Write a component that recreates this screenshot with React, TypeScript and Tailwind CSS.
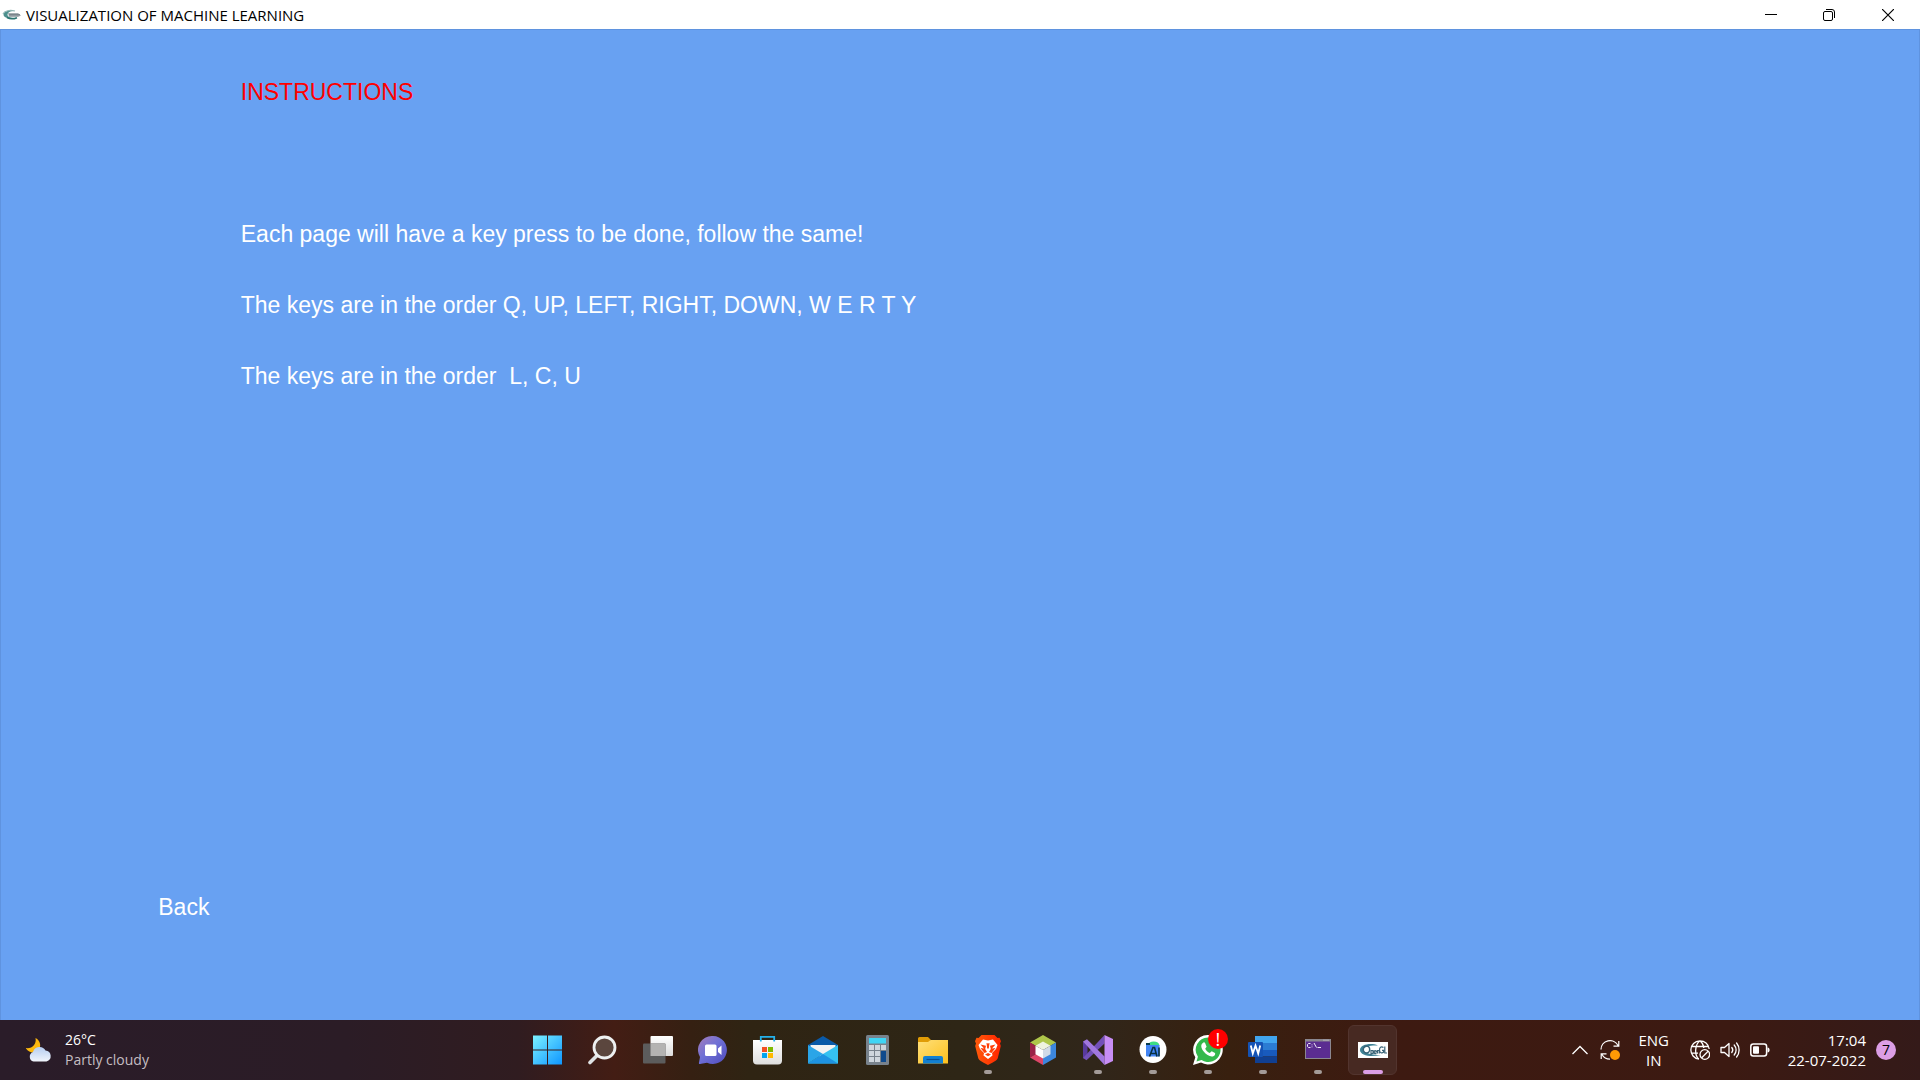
import type { ReactNode } from "react";

const uiFont = "font-['Open_Sans','Noto_Sans',sans-serif]";

function OpenGLMark() {
  return (
    <svg viewBox="0 0 20 12" className="h-3 w-5" aria-hidden="true">
      <path d="M12 2C7 .5 2 2.500 1.500 5.500c0 3.500 7 5 12.500 3.500C9 9 5.500 8 5.500 5.800 5.500 3.500 8.500 2 12 2z" fill="#4c8f8d" />
      <path d="M1 5C2.500 1.500 8 .8 13 2" fill="none" stroke="#8fb5b4" strokeWidth="1.200" />
      <path d="M6 4h10l3 2.500L16 8H7z" fill="#a5adb1" />
      <path d="M7 5.800h11" stroke="#6f7c83" strokeWidth="1.200" />
      <path d="M5 8.500c3 1.700 7 1.500 10 .2" fill="none" stroke="#2c7471" strokeWidth="1.500" />
    </svg>
  );
}

function StartIcon() {
  return (
    <svg viewBox="0 0 30 30" className="size-[30px]" aria-hidden="true">
      <defs>
        <linearGradient id="start" x1="0" y1="0" x2="30" y2="30" gradientUnits="userSpaceOnUse">
          <stop offset="0" stopColor="#7df3ff" />
          <stop offset="1" stopColor="#0b93ff" />
        </linearGradient>
      </defs>
      <path d="M0 .5h14v14H0zM15 .5h14v14H15zM0 15.500h14v14H0zM15 15.500h14v14H15z" fill="url(#start)" />
    </svg>
  );
}

function SearchIcon() {
  return (
    <svg viewBox="0 0 30 30" className="size-[30px]" aria-hidden="true">
      <path d="M9 20.500l-7 7" stroke="#dfe2e4" strokeWidth="3.600" strokeLinecap="round" />
      <circle cx="16.500" cy="12.500" r="10.500" fill="#5b463e" stroke="#eef0f1" strokeWidth="2.800" />
    </svg>
  );
}

function TaskViewIcon() {
  return (
    <svg viewBox="0 0 30 30" className="size-[30px]" aria-hidden="true">
      <defs>
        <linearGradient id="tvw" x1="0" y1="0" x2="0" y2="1">
          <stop offset="0" stopColor="#fff" />
          <stop offset="1" stopColor="#dcdcdc" />
        </linearGradient>
      </defs>
      <rect x="7.500" y="1" width="22.500" height="20" rx="1" fill="url(#tvw)" />
      <rect x="0" y="8.500" width="22.500" height="20" rx="1" fill="#5c5c5c" />
      <path d="M7.500 8.500h15v12.500h-15z" fill="#b4b3b2" />
    </svg>
  );
}

function ChatIcon() {
  return (
    <svg viewBox="0 0 30 30" className="size-[30px]" aria-hidden="true">
      <defs>
        <linearGradient id="chat" x1="0" y1="0" x2="1" y2="1">
          <stop offset="0" stopColor="#a57cb9" />
          <stop offset=".45" stopColor="#6f70d6" />
          <stop offset="1" stopColor="#4f4bbd" />
        </linearGradient>
      </defs>
      <path d="M15 1a14 14 0 1 1-6 26.700L2 29c-1 0-1.300-.5-1-1.500l1-5.500A14 14 0 0 1 15 1z" fill="url(#chat)" />
      <rect x="7" y="9.500" width="11.500" height="11.500" rx="1.500" fill="#fff" />
      <path d="M20 13.500l3.500-3v9.500L20 17z" fill="#fff" />
    </svg>
  );
}

function StoreIcon() {
  return (
    <svg viewBox="0 0 30 30" className="size-[30px]" aria-hidden="true">
      <defs>
        <linearGradient id="store" x1="0" y1="0" x2="0" y2="1">
          <stop offset="0" stopColor="#fff" />
          <stop offset="1" stopColor="#dedede" />
        </linearGradient>
      </defs>
      <path d="M0 5h29v20.500a4 4 0 0 1-4 4H4a4 4 0 0 1-4-4z" fill="url(#store)" />
      <path d="M7.800 6.500V1.800h13.400v4.700" fill="none" stroke="#24b1ea" strokeWidth="1.800" />
      <path d="M9 12h5v5H9z" fill="#f25022" />
      <path d="M15 12h5v5h-5z" fill="#7fba00" />
      <path d="M9 18h5v5H9z" fill="#00a4ef" />
      <path d="M15 18h5v5h-5z" fill="#ffb900" />
    </svg>
  );
}

function MailIcon() {
  return (
    <svg viewBox="0 0 30 30" className="size-[30px]" aria-hidden="true">
      <path d="M0 10L15 1l15 9v4H0z" fill="#0a5aa8" />
      <path d="M2.500 10h25v6L15 24 2.500 16z" fill="#f3f3f3" />
      <path d="M0 10l15 9-15 9.500z" fill="#2aa5e8" />
      <path d="M30 10v18.500H0L15 19z" fill="#35c1f1" />
      <path d="M15 19l15 9.500H0z" fill="#1e93e2" />
    </svg>
  );
}

function CalculatorIcon() {
  return (
    <svg viewBox="0 0 30 30" className="size-[30px]" aria-hidden="true">
      <rect x="3" y="0" width="23" height="30" rx="1.500" fill="#78828c" />
      <rect x="6" y="3" width="17" height="5.500" fill="#3fd5f5" />
      <path d="M6 10h5v5H6zM12 10h5v5h-5zM18 10h5v5h-5zM6 16h5v5H6zM12 16h5v5h-5zM6 22h5v5H6zM12 22h5v5h-5z" fill="#cfd6dd" />
      <path d="M18 16h5v11h-5z" fill="#0f4a8c" />
    </svg>
  );
}

function FolderIcon() {
  return (
    <svg viewBox="0 0 30 30" className="size-[30px]" aria-hidden="true">
      <defs>
        <linearGradient id="folder" x1="0" y1="0" x2="1" y2="1">
          <stop offset="0" stopColor="#ffe07a" />
          <stop offset="1" stopColor="#fcc01d" />
        </linearGradient>
      </defs>
      <path d="M0 3.500A1.500 1.500 0 0 1 1.500 2h8.500l3 3h-1v5H0z" fill="#e09c06" />
      <path d="M0 7h10l2.500-2H30v23.500H0z" fill="url(#folder)" />
      <path d="M5 28.500V23a2 2 0 0 1 2-2h16a2 2 0 0 1 2 2v5.500z" fill="#1280d2" />
      <path d="M8.500 24.500h13" stroke="#0b4f92" strokeWidth="1.200" />
    </svg>
  );
}

function BraveIcon() {
  return (
    <svg viewBox="0 0 30 30" className="size-[30px]" aria-hidden="true">
      <defs>
        <linearGradient id="brave" x1="0" y1="0" x2="1" y2="0">
          <stop offset="0" stopColor="#ff5a0a" />
          <stop offset="1" stopColor="#ff2400" />
        </linearGradient>
      </defs>
      <path d="M8.500 0h13l3 3 2-.3 1.500 3.500-1 2.300.8 2.500-3 12c-.5 2-3 3.500-9.800 7-6.800-3.500-9.300-5-9.800-7l-3-12L3 8.500 2 6.200l1.500-3.500 2 .3z" fill="url(#brave)" />
      <path d="M10 4.500l5 1 5-1 4.500 5.500-1.500 4-4 4 .5 2.500-4.500 3.500-4.500-3.500.5-2.500-4-4-1.500-4z" fill="#fff" />
      <path d="M7.500 9.500l5.500 1.200-.8 3.300 1.800 3-2.500 1-4-5 3.500.5zM22.500 9.500L17 10.700l.8 3.300-1.800 3 2.500 1 4-5-3.500.5zM12 19.500l3-1.500 3 1.500-3 1.800zM13.500 8l1.500.5 1.500-.5-.7 5.500h-1.600z" fill="#ff3f06" />
    </svg>
  );
}

function NetBeansIcon() {
  return (
    <svg viewBox="0 0 30 30" className="size-[30px]" aria-hidden="true">
      <path d="M15 0l13 7.500-6.500 3.700L15 7.500l-6.500 3.700L2 7.500z" fill="#aec64a" />
      <path d="M2 7.500l6.500 3.700v7.600L2 22.500z" fill="#9b2347" />
      <path d="M2 22.500l6.500-3.700 6.500 3.700V30z" fill="#dd4668" />
      <path d="M28 7.500v15L15 30v-7.500l6.500-3.700v-7.600z" fill="#3c86dd" />
      <path d="M15 6.500l7.500 4.300L15 15l-7.500-4.200z" fill="#eff3df" />
      <path d="M7.500 10.800L15 15v8.500l-7.500-4.300z" fill="#fff" />
      <path d="M22.500 10.800L15 15v8.500l7.500-4.300z" fill="#d1dbe8" />
    </svg>
  );
}

function VisualStudioIcon() {
  return (
    <svg viewBox="0 0 30 30" className="size-[30px]" aria-hidden="true">
      <path d="M0 6.500l4.500 3.200v10.600L0 23.500z" fill="#593a9e" />
      <path d="M21.500 0v8.500L3.500 25.200 0 23z" fill="#7350b8" />
      <path d="M0 6.500l4-2.300 17.500 17.300V30z" fill="#a177df" />
      <path d="M21.500 0L30 4v22l-8.500 4z" fill="#c78df5" />
    </svg>
  );
}

function AndroidStudioIcon() {
  return (
    <svg viewBox="0 0 30 30" className="size-[30px]" aria-hidden="true">
      <circle cx="15" cy="14.500" r="13.500" fill="#fff" />
      <path d="M10 10.500a5.800 4.500 0 0 1 11.500 0z" fill="#3ddc84" />
      <path d="M8 10h13.500v10.500a1 1 0 0 1-1 1H9a1 1 0 0 1-1-1z" fill="#4285f4" />
      <path d="M8 8h4v2H8z" fill="#0a3b4d" />
      <path d="M11.500 21.500l3.500-9h1.500l2.500 9M13 18.500h5M21 12.500v9" fill="none" stroke="#073042" strokeWidth="1.600" />
    </svg>
  );
}

function WhatsAppIcon() {
  return (
    <svg viewBox="0 0 30 30" className="size-[30px]" aria-hidden="true">
      <path d="M15 0a14.700 14.700 0 1 1-7 27.600L0 30l2.300-7.700A14.700 14.700 0 0 1 15 0z" fill="#fff" />
      <path d="M15 2.500a12.300 12.300 0 1 1-6.500 22.600L3.500 26.500l1.400-4.800A12.300 12.300 0 0 1 15 2.500z" fill="#34b94c" />
      <path d="M10.500 7.500c-3 1.500-3 5 0 8.800 3.200 4 7.500 6.300 10.300 4.700 1.200-.7 1.700-2 1.200-3l-3.300-1.800-2 1.800c-2-.8-3.700-2.500-4.500-4.300l1.400-1.900-1.500-3.800c-.4-.6-1-.8-1.600-.5z" fill="#fff" />
    </svg>
  );
}

function WordIcon() {
  return (
    <svg viewBox="0 0 30 30" className="size-[30px]" aria-hidden="true">
      <path d="M7 1h22v7H7z" fill="#41a5ee" />
      <path d="M7 8h22v7H7z" fill="#2b7cd3" />
      <path d="M7 15h22v6.500H7z" fill="#185abd" />
      <path d="M7 21.500h22V28H7z" fill="#103f91" />
      <rect x="0" y="7" width="15" height="15" rx="1" fill="#1553b5" />
      <path d="M2.800 10.500l2 8 2.700-8 2.700 8 2-8" fill="none" stroke="#fff" strokeWidth="1.800" />
    </svg>
  );
}

function ConsoleIcon() {
  return (
    <svg viewBox="0 0 30 30" className="size-[30px]" aria-hidden="true">
      <path d="M2 4h26v20H2z" fill="#8b8790" />
      <path d="M3 6.500h24V23H3z" fill="#5b2d91" />
      <path d="M20.500 5.200h5.500" stroke="#d6d2da" strokeDasharray="1 1" />
      <path d="M7.500 8.500h-2l-1 1v2l1 1h2M9 9.500v.8M9 11.500v.8M11 8l2.500 4.500M14.500 12.500h3.500" fill="none" stroke="#efe8f5" />
    </svg>
  );
}

function OpenGLIcon() {
  return (
    <svg viewBox="0 0 30 30" className="size-[30px]" aria-hidden="true">
      <path d="M0 7h30v16H0z" fill="#fff" />
      <path d="M20 10.500C13 7.500 2 9.500 2 15c0 5.500 11 7.500 21 5C15 20 6 18.500 5.500 15 5.500 11.500 13 10 20 10.500z" fill="#3e8296" />
      <ellipse cx="8.500" cy="14.500" rx="3.200" ry="3.500" fill="none" stroke="#3a6478" strokeWidth="1.500" />
      <path d="M13 20.500v-5h2v3h-2M16 17h2.500c0-2-2.500-2-2.500 0s1.500 1.800 2.500 1.500M19.500 18.500v-3h1.800v3M25.500 12.500c-2.500-1.500-4 0-4 2.500 0 3 2.500 3.500 4 2.300v-2H24M26.800 11.500v6.500h2.200" fill="none" stroke="#3a6478" strokeWidth="1.200" />
    </svg>
  );
}

function WeatherIcon() {
  return (
    <svg viewBox="0 0 28 26" className="h-[26px] w-7" aria-hidden="true">
      <defs>
        <linearGradient id="cloud" x1="0" y1="0" x2="0" y2="1">
          <stop offset="0" stopColor="#b5cdf0" />
          <stop offset="1" stopColor="#f1f5fc" />
        </linearGradient>
      </defs>
      <path d="M10.500 1c5 2.500 6 8.500 3 12-3.500 4-10 3-12.700-2 6 1 11-3.500 9.700-10z" fill="#fcb80f" />
      <path d="M8.500 24.500a5 5 0 0 1-.5-9.500 6.800 6.800 0 0 1 12.500-1.500 5.600 5.600 0 0 1 1 11z" fill="url(#cloud)" />
    </svg>
  );
}

function SyncIcon() {
  return (
    <svg viewBox="0 0 20 20" className="size-5" aria-hidden="true">
      <path d="M1 9.500A9 9 0 0 1 18 5.500M18.800 1v5.200h-5.300M1.200 19v-5.200h5.300M2 14.500a9 9 0 0 0 8 4.700" fill="none" stroke="#fff" strokeWidth="1.200" />
      <circle cx="15" cy="15" r="5" fill="#ff9a05" />
    </svg>
  );
}

function GlobeIcon() {
  return (
    <svg viewBox="0 0 20 20" className="size-5" fill="none" stroke="#fff" strokeWidth="1.300" aria-hidden="true">
      <path d="M9 19.200A9.200 9.200 0 1 1 19.200 9M1.400 6.500h17.200M1.400 13.200H8M8.500 19C4.500 15 4.500 5 10 .8c2.500 2 3.500 4.500 3.800 7.200" />
      <circle cx="14.800" cy="14.500" r="4.800" />
      <path d="M11.500 18l6.600-6.800" />
    </svg>
  );
}

function VolumeIcon() {
  return (
    <svg viewBox="0 0 20 20" className="size-5" fill="none" stroke="#fff" strokeWidth="1.300" strokeLinecap="round" strokeLinejoin="round" aria-hidden="true">
      <path d="M1 7.500h3.500L9 3.500v13l-4.500-4H1zM11.800 7.500a4 4 0 0 1 0 5M14.200 5a7.500 7.500 0 0 1 0 10M16.600 3a11 11 0 0 1 0 14" />
    </svg>
  );
}

function BatteryIcon() {
  return (
    <svg viewBox="0 0 20 20" className="size-5" aria-hidden="true">
      <rect x=".8" y="4" width="15.800" height="12" rx="2.500" fill="none" stroke="#fff" strokeWidth="1.500" />
      <rect x="3" y="6.200" width="6" height="7.600" rx="1" fill="#fff" />
      <path d="M17.500 7.500c2.800 0 2.800 5 0 5z" fill="#fff" />
    </svg>
  );
}

type App = { name: string; icon: ReactNode; running?: boolean; active?: boolean; alert?: boolean };

const apps: App[] = [
  { name: "Start", icon: <StartIcon /> },
  { name: "Search", icon: <SearchIcon /> },
  { name: "Task view", icon: <TaskViewIcon /> },
  { name: "Chat", icon: <ChatIcon /> },
  { name: "Microsoft Store", icon: <StoreIcon /> },
  { name: "Mail", icon: <MailIcon /> },
  { name: "Calculator", icon: <CalculatorIcon /> },
  { name: "File Explorer", icon: <FolderIcon /> },
  { name: "Brave", icon: <BraveIcon />, running: true },
  { name: "NetBeans", icon: <NetBeansIcon /> },
  { name: "Visual Studio", icon: <VisualStudioIcon />, running: true },
  { name: "Android Studio", icon: <AndroidStudioIcon />, running: true },
  { name: "WhatsApp", icon: <WhatsAppIcon />, running: true, alert: true },
  { name: "Word", icon: <WordIcon />, running: true },
  { name: "Console", icon: <ConsoleIcon />, running: true },
  { name: "OpenGL", icon: <OpenGLIcon />, active: true },
];

function TitleBar() {
  return (
    <header className="flex h-[29px] items-center bg-white px-0.5 text-black">
      <OpenGLMark />
      <h1 className="ml-1 flex-1 text-[15px] leading-7">VISUALIZATION OF MACHINE LEARNING</h1>
      <button aria-label="Minimize" className="flex h-full w-[58px] items-center justify-center">
        <svg viewBox="0 0 12 12" className="size-3" aria-hidden="true">
          <path d="M0 5.500h12" stroke="#000" />
        </svg>
      </button>
      <button aria-label="Restore" className="flex h-full w-[58px] items-center justify-center">
        <svg viewBox="0 0 12 12" className="size-3" fill="none" stroke="#000" aria-hidden="true">
          <path d="M3 .500h6a2.500 2.500 0 0 1 2.500 2.500v6" />
          <rect x=".5" y="2.500" width="9" height="9" rx="1.500" />
        </svg>
      </button>
      <button aria-label="Close" className="flex h-full w-[60px] items-center justify-center">
        <svg viewBox="0 0 12 12" className="size-3" aria-hidden="true">
          <path d="M0 0l12 12M12 0L0 12" stroke="#000" strokeWidth="1.200" />
        </svg>
      </button>
    </header>
  );
}

function TaskButton({ app }: { app: App }) {
  return (
    <button
      aria-label={app.name}
      className={
        app.active
          ? "relative flex h-[50px] w-[49px] items-center justify-center rounded-md border border-[#52342e] bg-[#472922]"
          : "relative flex h-[50px] w-[49px] items-center justify-center"
      }
    >
      {app.icon}
      {app.alert && (
        <span className="absolute top-1 right-1 flex size-5 items-center justify-center rounded-full bg-[#ff0000] font-['Open_Sans',sans-serif] text-lg text-white">
          !
        </span>
      )}
      {app.running && <span className="absolute bottom-px left-1/2 h-1 w-2 -translate-x-1/2 rounded-full bg-[#a39b98]" />}
      {app.active && <span className="absolute bottom-0 left-1/2 h-1 w-5 -translate-x-1/2 rounded-full bg-[#dc9ee5]" />}
    </button>
  );
}

function Taskbar() {
  return (
    <footer className="grid h-[60px] grid-cols-[1fr_auto_1fr] items-center bg-[linear-gradient(90deg,#2a1c29_0%,#2b1c26_18%,#301c20_27%,#431d14_32%,#352012_36%,#2f2413_39%,#2e2616_50%,#30261a_57%,#38200f_64%,#3d1a11_72%,#3c1a12_90%,#341a19_100%)] text-white">
      <button className="flex items-center gap-3 justify-self-start pl-[25px] text-left text-sm leading-5">
        <WeatherIcon />
        <span>
          <span className="block">26°C</span>
          <span className="block text-[#c5bec2]">Partly cloudy</span>
        </span>
      </button>
      <nav aria-label="Applications" className="flex gap-1.5">
        {apps.map((app) => (
          <TaskButton key={app.name} app={app} />
        ))}
      </nav>
      <div className="flex items-center justify-self-end pr-6 text-[15px] leading-5">
        <button aria-label="Show hidden icons" className="mr-3">
          <svg viewBox="0 0 16 10" className="h-2.5 w-4" aria-hidden="true">
            <path d="M.5 9L8 1.500 15.500 9" fill="none" stroke="#fff" strokeWidth="1.300" />
          </svg>
        </button>
        <button aria-label="Updates">
          <SyncIcon />
        </button>
        <button className="mr-5 ml-[18px] w-8 text-center">
          ENG
          <br />
          IN
        </button>
        <button aria-label="Network, volume and battery" className="flex gap-2.5">
          <GlobeIcon />
          <VolumeIcon />
          <BatteryIcon />
        </button>
        <button className="ml-[18px] flex items-center gap-2.5 text-right">
          <span>
            <span className="block">17:04</span>
            <span className="block">22-07-2022</span>
          </span>
          <span className="flex size-5 items-center justify-center rounded-full bg-[#dc9ee5] text-sm text-black">7</span>
        </button>
      </div>
    </footer>
  );
}

export default function App() {
  return (
    <div className={`flex min-h-screen flex-col ${uiFont}`}>
      <TitleBar />
      <main className="flex flex-1 flex-col border-x border-t border-[#5f93df] bg-[#68a1f2] font-['Liberation_Sans',sans-serif] text-[23px] leading-8 text-white">
        <section className="flex-1 pt-[46px] pl-[12.5%]">
          <h2 className="text-[#ff0000]">INSTRUCTIONS</h2>
          <div className="mt-[110px] flex flex-col gap-[39px] whitespace-pre-wrap">
            <p>Each page will have a key press to be done, follow the same!</p>
            <p>The keys are in the order Q, UP, LEFT, RIGHT, DOWN, W E R T Y</p>
            <p>{"The keys are in the order  L, C, U"}</p>
          </div>
        </section>
        <button className="mb-[97px] ml-[8.2%] self-start">Back</button>
      </main>
      <Taskbar />
    </div>
  );
}
